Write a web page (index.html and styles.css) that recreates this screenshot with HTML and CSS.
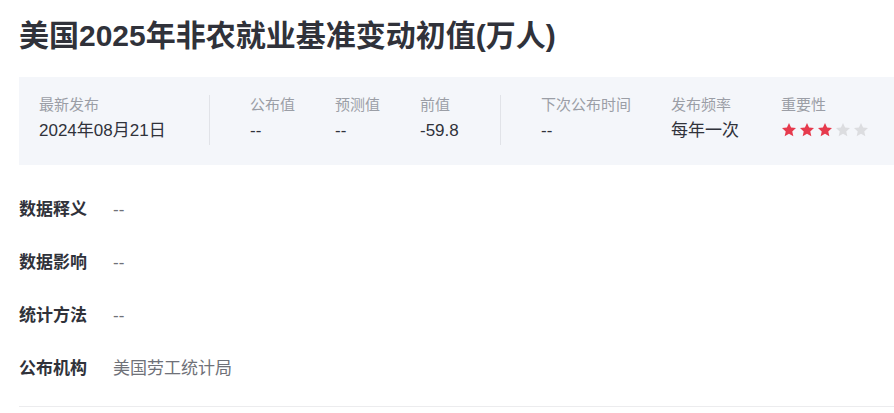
FILE: index.html
```html
<!DOCTYPE html>
<html>

<head>
    <meta name="viewport" content="width=device-width, initial-scale=1">
    <link rel="stylesheet" href="styles.css">
</head>

<body>
    <div class="page">
        <h1 class="title">美国2025年非农就业基准变动初值(万人)</h1>

        <div class="summary">
            <div class="group">
                <div class="item w-date">
                    <div class="label">最新发布</div>
                    <div class="value">2024年08月21日</div>
                </div>
            </div>
            <div class="group split">
                <div class="item w-85">
                    <div class="label">公布值</div>
                    <div class="value">--</div>
                </div>
                <div class="item w-85">
                    <div class="label">预测值</div>
                    <div class="value">--</div>
                </div>
                <div class="item w-80">
                    <div class="label">前值</div>
                    <div class="value">-59.8</div>
                </div>
            </div>
            <div class="group split">
                <div class="item w-130">
                    <div class="label">下次公布时间</div>
                    <div class="value">--</div>
                </div>
                <div class="item w-110">
                    <div class="label">发布频率</div>
                    <div class="value">每年一次</div>
                </div>
                <div class="item">
                    <div class="label">重要性</div>
                    <div class="value stars">
                        <svg class="star on" viewBox="0 0 24 24"><polygon points="12,1.5 15.1,8.3 22.5,9.1 16.9,14.1 18.5,21.5 12,17.7 5.5,21.5 7.1,14.1 1.5,9.1 8.9,8.3"/></svg>
                        <svg class="star on" viewBox="0 0 24 24"><polygon points="12,1.5 15.1,8.3 22.5,9.1 16.9,14.1 18.5,21.5 12,17.7 5.5,21.5 7.1,14.1 1.5,9.1 8.9,8.3"/></svg>
                        <svg class="star on" viewBox="0 0 24 24"><polygon points="12,1.5 15.1,8.3 22.5,9.1 16.9,14.1 18.5,21.5 12,17.7 5.5,21.5 7.1,14.1 1.5,9.1 8.9,8.3"/></svg>
                        <svg class="star" viewBox="0 0 24 24"><polygon points="12,1.5 15.1,8.3 22.5,9.1 16.9,14.1 18.5,21.5 12,17.7 5.5,21.5 7.1,14.1 1.5,9.1 8.9,8.3"/></svg>
                        <svg class="star" viewBox="0 0 24 24"><polygon points="12,1.5 15.1,8.3 22.5,9.1 16.9,14.1 18.5,21.5 12,17.7 5.5,21.5 7.1,14.1 1.5,9.1 8.9,8.3"/></svg>
                    </div>
                </div>
            </div>
        </div>

        <div class="details">
            <div class="row">
                <span class="row-label">数据释义</span>
                <span class="row-value">--</span>
            </div>
            <div class="row">
                <span class="row-label">数据影响</span>
                <span class="row-value">--</span>
            </div>
            <div class="row">
                <span class="row-label">统计方法</span>
                <span class="row-value">--</span>
            </div>
            <div class="row">
                <span class="row-label">公布机构</span>
                <span class="row-value">美国劳工统计局</span>
            </div>
        </div>
    </div>
</body>

</html>
```

FILE: styles.css
```css
body {
    margin: 0;
    overflow: hidden;
    font-family: "Liberation Sans", "Noto Sans CJK SC", sans-serif;
    color: #333;
    background: #fff;
}

.page {
    padding: 16px 0 0 19px;
}

.title {
    margin: 0 0 21px 0;
    font-size: 30px;
    line-height: 40px;
    font-weight: bold;
    color: #30323a;
}

.summary {
    display: flex;
    height: 88px;
    box-sizing: border-box;
    padding: 18px 0 0 20px;
    background-color: #f4f6fa;
}

.group {
    display: flex;
    height: 50px;
}

.group.split {
    border-left: 1px solid #e1e3e8;
    padding-left: 40px;
}

.item {
    display: flex;
    flex-direction: column;
    gap: 4px;
}

.w-date {
    width: 170px;
}

.w-85 {
    width: 85px;
}

.w-80 {
    width: 80px;
}

.w-130 {
    width: 130px;
}

.w-110 {
    width: 110px;
}

.label {
    font-size: 15px;
    line-height: 20px;
    color: #9b9ea6;
}

.value {
    font-size: 17px;
    line-height: 24px;
    color: #30323a;
}

.stars {
    display: flex;
    align-items: center;
    gap: 2px;
    padding-top: 3px;
}

.star {
    width: 16px;
    height: 16px;
    fill: #dcdde0;
}

.star.on {
    fill: #e63a4d;
}

.details {
    padding-top: 18px;
    border-bottom: 1px solid #ececee;
    padding-bottom: 11px;
}

.row {
    display: flex;
    padding: 14px 0;
    font-size: 17px;
    line-height: 25px;
}

.row-label {
    width: 94px;
    font-weight: bold;
    color: #30323a;
}

.row-value {
    color: #6f7178;
}
```
